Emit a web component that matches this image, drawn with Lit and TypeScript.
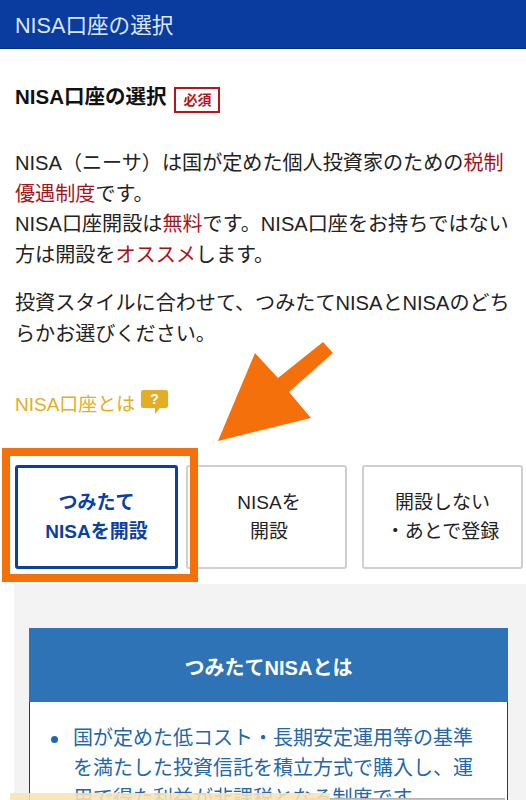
import { LitElement, html, css } from 'lit';
import { customElement } from 'lit/decorators.js';

@customElement('app-root')
export class AppRoot extends LitElement {
  static styles = css`
    :host {
      display: block;
      position: relative;
      height: 800px;
      overflow: hidden;
      background: #fff;
      color: #222;
      font-family: 'Liberation Sans', 'Noto Sans CJK JP', sans-serif;
    }

    .bar {
      height: 49px;
      box-sizing: border-box;
      padding: 11px 15px 0;
      background: #0a3b9f;
      border-bottom: 1px solid #062c7c;
      color: #dfe7f5;
      font-size: 21.6px;
      line-height: 29px;
    }

    .content {
      padding: 0 3px 0 15px;
    }

    .title {
      display: flex;
      align-items: flex-start;
      gap: 7px;
      margin-top: 34px;
      font-size: 20.5px;
      line-height: 28px;
      font-weight: bold;
      color: #111;
    }

    .req {
      width: 46px;
      height: 26px;
      box-sizing: border-box;
      margin-top: 4px;
      margin-left: 1px;
      border: 2px solid #b5161b;
      color: #b5161b;
      font-size: 14px;
      line-height: 22px;
      text-align: center;
    }

    p {
      margin: 0;
      font-size: 20.1px;
      line-height: 30.5px;
    }

    .intro {
      margin-top: 35px;
    }

    .style {
      margin-top: 18px;
    }

    em {
      font-style: normal;
      color: #a5141a;
    }

    .what {
      display: flex;
      align-items: flex-start;
      gap: 6px;
      margin-top: 43px;
      color: #e3ae24;
      font-size: 19px;
      line-height: 26px;
    }

    .what svg {
      margin-top: -2px;
    }

    .choices {
      display: grid;
      grid-template-columns: 163px 161px 161px;
      column-gap: 8px;
      margin-top: 47px;
    }

    .choice {
      height: 104px;
      box-sizing: border-box;
      display: flex;
      align-items: center;
      justify-content: center;
      text-align: center;
      border: 2px solid #cfcfcf;
      border-radius: 3px;
      font-size: 19px;
      line-height: 29px;
    }

    .choice.active {
      border: 3px solid #0b3fa3;
      color: #0b3fa3;
      font-weight: bold;
    }

    .choice.middle {
      padding-left: 5px;
    }

    .choice.last {
      margin-left: 7px;
      margin-right: -7px;
    }

    .panel {
      margin: 15px -3px 0 -1px;
      padding: 44px 18px 0 15px;
      background: #f3f3f4;
    }

    .card {
      background: #fff;
      border: 1px solid #0a3b9f;
      border-top: 0;
    }

    .card-head {
      height: 74px;
      box-sizing: border-box;
      padding-top: 3px;
      margin: 0 -1px;
      display: flex;
      align-items: center;
      justify-content: center;
      background: #2e73b5;
      color: #fff;
      font-size: 20px;
      font-weight: bold;
    }

    .list {
      padding: 21px 30px 0 21px;
      color: #2367a8;
      font-size: 20px;
      line-height: 30px;
    }

    .item {
      display: flex;
      gap: 15px;
    }

    .dot {
      flex: none;
      width: 7px;
      height: 7px;
      margin-top: 13px;
      border-radius: 50%;
      background: #2367a8;
    }

    /* arrow and highlight are annotations laid over the page */
    .frame {
      position: absolute;
      left: 2px;
      top: 448px;
      width: 196px;
      height: 134px;
      box-sizing: border-box;
      border: 8px solid #f4700a;
    }

    .arrow {
      position: absolute;
      left: 215px;
      top: 340px;
    }

    .foot {
      position: absolute;
      left: 10px;
      top: 793px;
      width: 320px;
      height: 7px;
      background: rgba(251, 226, 178, 0.88);
    }

    .strip {
      position: absolute;
      left: 305px;
      top: 798px;
      width: 200px;
      height: 2px;
      background: linear-gradient(#a8a8a8, #cfcfcf);
    }
  `;

  render() {
    return html`
      <div class="bar">NISA口座の選択</div>
      <div class="content">
        <div class="title">NISA口座の選択<span class="req">必須</span></div>
        <p class="intro">NISA（ニーサ）は国が定めた個人投資家のための<em>税制<br />優遇制度</em>です。<br />NISA口座開設は<em>無料</em>です。NISA口座をお持ちではない<br />方は開設を<em>オススメ</em>します。</p>
        <p class="style">投資スタイルに合わせて、つみたてNISAとNISAのどち<br />らかお選びください。</p>
        <div class="what">
          NISA口座とは
          <svg width="27" height="24" viewBox="0 0 27 24">
            <path d="M2 0h23a2 2 0 0 1 2 2v14a2 2 0 0 1-2 2h-6l-5 6v-6H2a2 2 0 0 1-2-2V2a2 2 0 0 1 2-2z" fill="#e3ae24" />
            <text x="13.5" y="14" text-anchor="middle" font-size="14" font-weight="bold" fill="#fff">?</text>
          </svg>
        </div>
        <div class="choices">
          <div class="choice active">つみたて<br />NISAを開設</div>
          <div class="choice middle">NISAを<br />開設</div>
          <div class="choice last">開設しない<br />・あとで登録</div>
        </div>
        <div class="panel">
          <div class="card">
            <div class="card-head">つみたてNISAとは</div>
            <div class="list">
              <div class="item">
                <span class="dot"></span>
                <span>国が定めた低コスト・長期安定運用等の基準を満たした投資信託を積立方式で購入し、運用で得た利益が非課税となる制度です。</span>
              </div>
            </div>
          </div>
        </div>
      </div>
      <div class="frame"></div>
      <svg class="arrow" width="120" height="104" viewBox="0 0 120 104">
        <path d="M3 101L40 13 63 38 108 2 118 13 74 52 96 78z" fill="#f4700a" />
      </svg>
      <div class="strip"></div>
      <div class="foot"></div>
    `;
  }
}
